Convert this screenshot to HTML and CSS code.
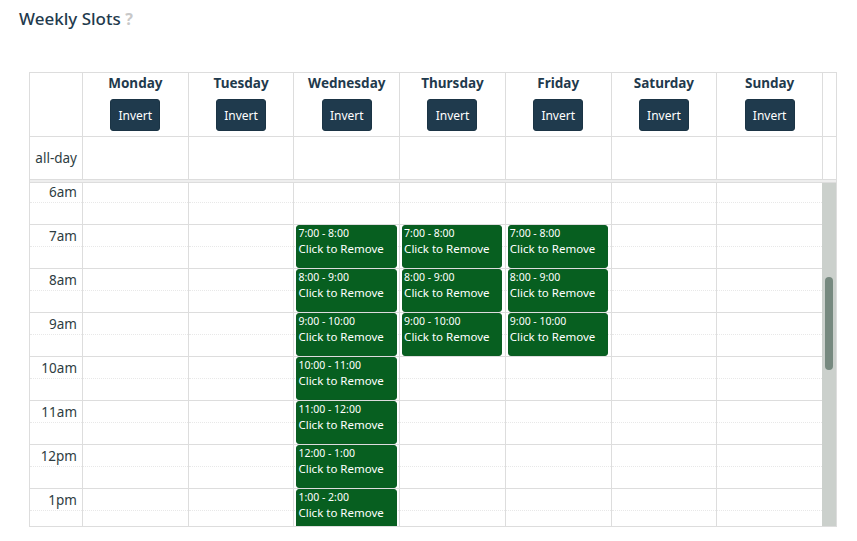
FILE: index.html
```html
<!DOCTYPE html>
<html lang="en">
<head>
<meta charset="utf-8">
<title>Weekly Slots</title>
<link rel="stylesheet" href="styles.css">
</head>
<body>
<h2 class="title">Weekly Slots <span class="help">?</span></h2>
<div class="cal">
  <div class="head">
    <div class="hcell axis"></div>
    <div class="hcell"><div class="dname">Monday</div><button class="btn">Invert</button></div>
    <div class="hcell"><div class="dname">Tuesday</div><button class="btn">Invert</button></div>
    <div class="hcell"><div class="dname">Wednesday</div><button class="btn">Invert</button></div>
    <div class="hcell"><div class="dname">Thursday</div><button class="btn">Invert</button></div>
    <div class="hcell"><div class="dname">Friday</div><button class="btn">Invert</button></div>
    <div class="hcell"><div class="dname">Saturday</div><button class="btn">Invert</button></div>
    <div class="hcell"><div class="dname">Sunday</div><button class="btn">Invert</button></div>
    <div class="hcell gutter"></div>
  </div>
  <div class="allday">
    <div class="acell axis"><span class="alabel">all-day</span></div>
    <div class="acell"></div><div class="acell"></div><div class="acell"></div><div class="acell"></div>
    <div class="acell"></div><div class="acell"></div><div class="acell"></div>
    <div class="acell gutter"></div>
  </div>
  <div class="divider"></div>
  <div class="body">
    <div class="slots">
      <!-- 6am -->
      <div class="cell axis"><span class="tlabel">6am</span></div>
      <div class="cell"></div><div class="cell"></div><div class="cell"></div><div class="cell"></div><div class="cell"></div><div class="cell"></div><div class="cell"></div>
      <!-- 7am -->
      <div class="cell axis"><span class="tlabel">7am</span></div>
      <div class="cell"></div><div class="cell"></div>
      <div class="cell"><div class="ev"><div class="ev-time">7:00 - 8:00</div><div class="ev-title">Click to Remove</div></div></div>
      <div class="cell"><div class="ev"><div class="ev-time">7:00 - 8:00</div><div class="ev-title">Click to Remove</div></div></div>
      <div class="cell"><div class="ev"><div class="ev-time">7:00 - 8:00</div><div class="ev-title">Click to Remove</div></div></div>
      <div class="cell"></div><div class="cell"></div>
      <!-- 8am -->
      <div class="cell axis"><span class="tlabel">8am</span></div>
      <div class="cell"></div><div class="cell"></div>
      <div class="cell"><div class="ev"><div class="ev-time">8:00 - 9:00</div><div class="ev-title">Click to Remove</div></div></div>
      <div class="cell"><div class="ev"><div class="ev-time">8:00 - 9:00</div><div class="ev-title">Click to Remove</div></div></div>
      <div class="cell"><div class="ev"><div class="ev-time">8:00 - 9:00</div><div class="ev-title">Click to Remove</div></div></div>
      <div class="cell"></div><div class="cell"></div>
      <!-- 9am -->
      <div class="cell axis"><span class="tlabel">9am</span></div>
      <div class="cell"></div><div class="cell"></div>
      <div class="cell"><div class="ev"><div class="ev-time">9:00 - 10:00</div><div class="ev-title">Click to Remove</div></div></div>
      <div class="cell"><div class="ev"><div class="ev-time">9:00 - 10:00</div><div class="ev-title">Click to Remove</div></div></div>
      <div class="cell"><div class="ev"><div class="ev-time">9:00 - 10:00</div><div class="ev-title">Click to Remove</div></div></div>
      <div class="cell"></div><div class="cell"></div>
      <!-- 10am -->
      <div class="cell axis"><span class="tlabel">10am</span></div>
      <div class="cell"></div><div class="cell"></div>
      <div class="cell"><div class="ev"><div class="ev-time">10:00 - 11:00</div><div class="ev-title">Click to Remove</div></div></div>
      <div class="cell"></div><div class="cell"></div><div class="cell"></div><div class="cell"></div>
      <!-- 11am -->
      <div class="cell axis"><span class="tlabel">11am</span></div>
      <div class="cell"></div><div class="cell"></div>
      <div class="cell"><div class="ev"><div class="ev-time">11:00 - 12:00</div><div class="ev-title">Click to Remove</div></div></div>
      <div class="cell"></div><div class="cell"></div><div class="cell"></div><div class="cell"></div>
      <!-- 12pm -->
      <div class="cell axis"><span class="tlabel">12pm</span></div>
      <div class="cell"></div><div class="cell"></div>
      <div class="cell"><div class="ev"><div class="ev-time">12:00 - 1:00</div><div class="ev-title">Click to Remove</div></div></div>
      <div class="cell"></div><div class="cell"></div><div class="cell"></div><div class="cell"></div>
      <!-- 1pm -->
      <div class="cell axis"><span class="tlabel">1pm</span></div>
      <div class="cell"></div><div class="cell"></div>
      <div class="cell"><div class="ev"><div class="ev-time">1:00 - 2:00</div><div class="ev-title">Click to Remove</div></div></div>
      <div class="cell"></div><div class="cell"></div><div class="cell"></div><div class="cell"></div>
    </div>
    <div class="scrollbar"><div class="thumb"></div></div>
  </div>
</div>
</body>
</html>
```
FILE: styles.css
```css
* { box-sizing: border-box; }

body {
  margin: 0;
  background: #fff;
  font-family: "Noto Sans", "Open Sans", sans-serif;
  color: #2e3d42;
}

.title {
  margin: 0;
  height: 29px;
  padding: 9px 19px 0;
  font-size: 17px;
  line-height: 20px;
  font-weight: 500;
  color: #1f3a4d;
}

.help {
  color: #c8c8c8;
  font-size: 16px;
  line-height: 1;
  font-weight: 700;
}

.cal {
  margin: 43px 0 0 29px;
  width: 808px;
  border: 1px solid #ddd;
}

.head,
.allday {
  display: grid;
  grid-template-columns: 53px repeat(7, 1fr) 13px;
}

.hcell {
  height: 64px;
  border-right: 1px solid #ddd;
  border-bottom: 1px solid #ddd;
  display: flex;
  flex-direction: column;
  align-items: center;
}

.hcell.gutter,
.acell.gutter { border-right: none; }

.dname {
  font-size: 13.5px;
  line-height: 20px;
  font-weight: 700;
  color: #1f3a4d;
}

.btn {
  margin-top: 6px;
  width: 50px;
  height: 32px;
  padding: 2px 0 0;
  border: 1px solid #1b3445;
  border-radius: 3px;
  background: #1f3a4d;
  color: #fff;
  font-family: "Noto Sans", "Open Sans", sans-serif;
  font-size: 12px;
  line-height: 28px;
}

.acell {
  height: 42px;
  border-right: 1px solid #ddd;
}

.axis {
  text-align: right;
  padding-right: 5px;
}

.alabel {
  display: block;
  font-size: 13.5px;
  line-height: 42px;
}

.divider {
  height: 4px;
  border-top: 1px solid #ddd;
  border-bottom: 1px solid #ddd;
  background: #eee;
}

.body {
  display: flex;
  height: 343px;
  overflow: hidden;
}

.slots {
  width: 792px;
  flex: none;
  overflow: hidden;
  align-self: flex-start;
  margin-top: -2px;
  display: grid;
  grid-template-columns: 53px repeat(7, 105.714px);
  grid-auto-rows: 44px;
}

.cell {
  position: relative;
  border-right: 1px solid #ddd;
  border-bottom: 1px solid #ddd;
  display: flex;
}

.cell::before {
  content: "";
  position: absolute;
  left: 0;
  right: 0;
  top: 21px;
  border-top: 1px dotted #e8e8e8;
}

.cell.axis { display: block; }

.tlabel {
  display: block;
  font-size: 13.5px;
  line-height: 21px;
  padding-top: 1px;
}

.ev {
  position: relative;
  flex: 1;
  margin: 0 2.6px 0 2px;
  border: 1px solid #0a5c22;
  border-radius: 3px;
  background: #075f20;
  color: #fff;
  padding: 0 1px;
  overflow: hidden;
}

.ev-time {
  font-size: 10.5px;
  line-height: 14px;
}

.ev-title {
  font-size: 11.5px;
  line-height: 17px;
  white-space: nowrap;
}

.scrollbar {
  flex: none;
  width: 14px;
  background: #cbd0cc;
  padding: 94px 3px 0;
}

.thumb {
  height: 93px;
  border-radius: 4px;
  background: #76897f;
}
```
